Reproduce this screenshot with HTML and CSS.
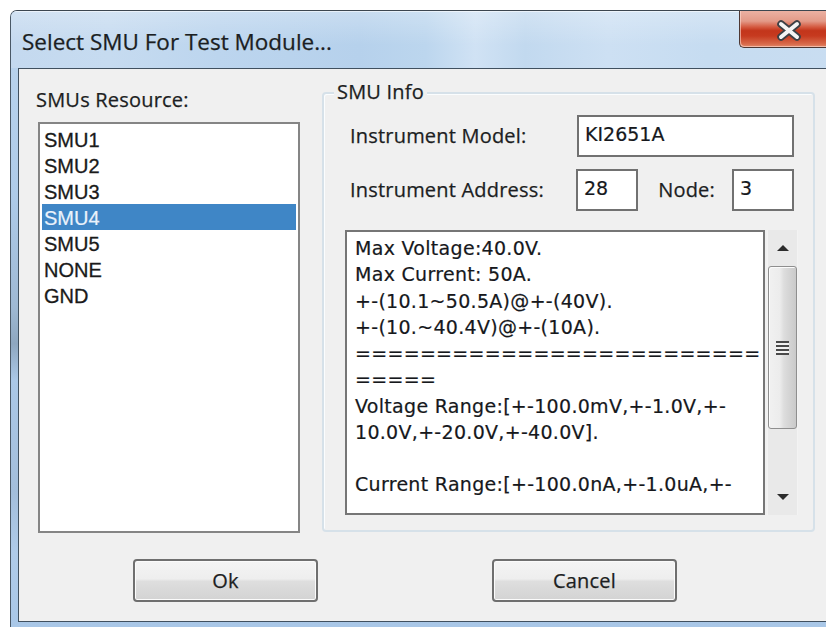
FILE: index.html
```html
<!DOCTYPE html>
<html>
<head>
<meta charset="utf-8">
<title>Select SMU For Test Module...</title>
<link rel="stylesheet" href="styles.css">
</head>
<body>
<div class="window">
  <div class="titlebar">
    <span class="title">Select SMU For Test Module...</span>
    <div class="close-btn">
      <svg class="close-x" width="26" height="21" viewBox="0 0 26 21">
        <path d="M5 4 L21 17 M21 4 L5 17" stroke="#3d4045" stroke-width="7.5" stroke-linecap="round"/>
        <path d="M5 4 L21 17 M21 4 L5 17" stroke="#f4f4f4" stroke-width="4" stroke-linecap="round"/>
      </svg>
    </div>
  </div>
  <div class="client">
    <div class="main">
      <div class="resources">
        <div class="label res-label">SMUs Resource:</div>
        <ul class="listbox">
          <li>SMU1</li>
          <li>SMU2</li>
          <li>SMU3</li>
          <li class="selected">SMU4</li>
          <li>SMU5</li>
          <li>NONE</li>
          <li>GND</li>
        </ul>
      </div>
      <div class="group">
        <div class="label group-title">SMU Info</div>
        <div class="row">
          <span class="label field-label">Instrument Model:</span>
          <div class="edit edit-model">KI2651A</div>
        </div>
        <div class="row row-address">
          <span class="label field-label field-label-address">Instrument Address:</span>
          <div class="edit edit-small">28</div>
          <span class="label node-label">Node:</span>
          <div class="edit edit-small">3</div>
        </div>
        <div class="info">
          <div class="info-text">Max Voltage:40.0V.
Max Current: 50A.
+-(10.1~50.5A)@+-(40V).
+-(10.~40.4V)@+-(10A).
=========================
=====
Voltage Range:[+-100.0mV,+-1.0V,+-
10.0V,+-20.0V,+-40.0V].

Current Range:[+-100.0nA,+-1.0uA,+-</div>
          <div class="scrollbar">
            <div class="sb-btn"><span class="arrow-up"></span></div>
            <div class="sb-track">
              <div class="sb-thumb">
                <span class="grip"></span>
              </div>
            </div>
            <div class="sb-btn"><span class="arrow-down"></span></div>
          </div>
        </div>
      </div>
    </div>
    <div class="buttons">
      <button class="btn btn-ok">Ok</button>
      <button class="btn btn-cancel">Cancel</button>
    </div>
  </div>
</div>
</body>
</html>
```
FILE: styles.css
```css
html, body {
  margin: 0;
  padding: 0;
}

body {
  width: 826px;
  height: 627px;
  overflow: hidden;
  background: #ffffff;
}

/* Window frame (glass border) */
.window {
  box-sizing: border-box;
  margin: 10px 0 0 10px;
  width: 830px;
  height: 617px;
  border-top: 1px solid #3c4650;
  border-left: 1px solid #4a5866;
  border-top-left-radius: 7px;
  overflow: hidden;
  display: flex;
  flex-direction: column;
  background: linear-gradient(180deg,
    #bcd5ee 0%, #aecbe9 30%, #9fb9d4 48%, #8ea7c0 54%,
    #abc8e7 60%, #a3bedb 78%, #afcbe9 88%, #a9c7e7 100%);
}

.titlebar {
  flex: 0 0 57px;
  display: flex;
  align-items: flex-start;
  padding-left: 11px;
  box-shadow: inset 0 1px 0 rgba(255, 255, 255, 0.55);
  background:
    linear-gradient(180deg, rgba(255, 255, 255, 0.25) 0%, rgba(255, 255, 255, 0) 60%),
    linear-gradient(90deg,
      #c4d9ef 0%, #c6dbf0 12%, #bcd5ee 25%, #b6d1ec 42%,
      #bcd6ee 50%, #d0e2f4 56%, #c2d9ef 62%, #cde0f3 72%,
      #c6dcf1 84%, #c9ddf1 100%);
}

.title {
  margin-top: 16px;
  font-family: "Open Sans", "Noto Sans", sans-serif;
  font-size: 22.5px;
  line-height: 30px;
  color: #1b1e22;
  -webkit-text-stroke: 0.25px #1b1e22;
}

.close-btn {
  margin-left: auto;
  margin-top: -1px;
  width: 101px;
  height: 38px;
  box-sizing: border-box;
  border-left: 1px solid #4e3834;
  border-bottom: 1px solid #4e3834;
  border-bottom-left-radius: 5px;
  box-shadow: inset 1px -1px 0 rgba(255, 220, 210, 0.6);
  background: linear-gradient(180deg,
    #ecb3a5 0%, #e39a88 30%, #d45a40 46%, #c3351b 56%,
    #c63a1f 70%, #d86a4b 92%, #e38a6b 100%);
  display: flex;
  padding-left: 36px;
  padding-top: 10px;
}

.close-x {
  display: block;
}

/* Dialog client area */
.client {
  box-sizing: border-box;
  flex: 0 0 554px;
  margin-left: 7px;
  border: 1px solid #40505f;
  background: #f0f0f0;
  padding-top: 18px;
  display: flex;
  flex-direction: column;
}

.label {
  font-family: "Open Sans", "Noto Sans", sans-serif;
  font-size: 20px;
  letter-spacing: 0.2px;
  line-height: 26px;
  color: #1c1e22;
  white-space: nowrap;
  -webkit-text-stroke: 0.25px #1c1e22;
}

.main {
  display: flex;
  align-items: flex-start;
}

.resources {
  margin-left: 19px;
  width: 262px;
  flex-shrink: 0;
}

.res-label {
  margin-left: -2px;
  margin-bottom: 9px;
}

.listbox {
  box-sizing: border-box;
  list-style: none;
  margin: 0;
  padding: 2px;
  height: 411px;
  background: #ffffff;
  border: 2px solid #858585;
}

.listbox li {
  box-sizing: border-box;
  height: 26px;
  padding: 3px 0 0 2px;
  line-height: 23px;
  font-family: "Liberation Sans", Arial, sans-serif;
  font-size: 20px;
  color: #1a1a1a;
  -webkit-text-stroke: 0.3px #1a1a1a;
}

.listbox li.selected {
  background: #3f86c6;
  color: #eaf2fb;
  -webkit-text-stroke: 0.2px #eaf2fb;
}

/* SMU Info group box */
.group {
  position: relative;
  box-sizing: border-box;
  margin: 5px 0 0 22px;
  width: 493px;
  height: 440px;
  flex-shrink: 0;
  border: 2px solid #d6e1e9;
  border-radius: 4px;
  box-shadow: inset 1px 1px 0 #fbfdfe;
  padding: 21px 15px 13px 21px;
}

.group-title {
  position: absolute;
  top: -15px;
  left: 10px;
  padding: 0 3px;
  background: #f0f0f0;
}

.row {
  display: flex;
  align-items: center;
  height: 42px;
  margin-right: 4px;
}

.row-address {
  margin-top: 12px;
}

.field-label {
  margin-left: 5px;
  width: 227px;
  flex-shrink: 0;
}

.field-label-address {
  width: 226px;
}

.node-label {
  margin-left: auto;
  margin-right: 17px;
}

.edit {
  box-sizing: border-box;
  height: 42px;
  border: 2px solid #717171;
  background: #ffffff;
  padding: 4px 0 0 6px;
  font-family: "DejaVu Sans", Verdana, sans-serif;
  font-size: 19px;
  line-height: 26.25px;
  color: #16181c;
  -webkit-text-stroke: 0.2px #16181c;
}

.edit-model {
  flex: 1;
}

.edit-small {
  width: 62px;
  flex-shrink: 0;
}

/* Read-only info text with its scroll bar */
.info {
  display: flex;
  margin-top: 19px;
  height: 285px;
}

.info-text {
  box-sizing: border-box;
  width: 420px;
  flex-shrink: 0;
  height: 100%;
  border: 2px solid #767676;
  background: #ffffff;
  padding: 3px 0 0 8px;
  overflow: hidden;
  white-space: pre;
  font-family: "DejaVu Sans", Verdana, sans-serif;
  font-size: 19px;
  letter-spacing: 0.3px;
  line-height: 26.25px;
  color: #16181c;
  -webkit-text-stroke: 0.2px #16181c;
}

.scrollbar {
  box-sizing: border-box;
  margin-left: 2px;
  width: 31px;
  flex-shrink: 0;
  display: flex;
  flex-direction: column;
  background: #e9e9e9;
  border-left: 1px solid #f3f3f3;
  border-right: 1px solid #f3f3f3;
}

.sb-btn {
  flex: 0 0 36px;
  display: flex;
  align-items: center;
  justify-content: center;
}

.arrow-up,
.arrow-down {
  width: 0;
  height: 0;
  border-left: 6px solid transparent;
  border-right: 6px solid transparent;
}

.arrow-up {
  border-bottom: 6px solid #2c2c2c;
}

.arrow-down {
  border-top: 6px solid #2c2c2c;
}

.sb-track {
  flex: 1;
}

.sb-thumb {
  box-sizing: border-box;
  height: 163px;
  border: 1px solid #8e8e8e;
  border-radius: 3px;
  box-shadow: inset 1px 1px 0 #fbfbfb;
  background: linear-gradient(90deg,
    #f1f1f1 0%, #ececec 40%, #dddddd 55%, #d2d2d2 80%, #c9c9c9 100%);
  display: flex;
  align-items: center;
  justify-content: center;
}

.grip {
  width: 13px;
  height: 14px;
  background: repeating-linear-gradient(180deg,
    #4a4a4a 0px, #4a4a4a 2px, #f2f2f2 2px, #f2f2f2 4px);
}

/* OK / Cancel */
.buttons {
  display: flex;
  margin-top: 26px;
  padding-left: 114px;
  gap: 174px;
}

.btn {
  box-sizing: border-box;
  width: 185px;
  height: 43px;
  padding: 0;
  border: 2px solid #6f6f6f;
  border-radius: 4px;
  box-shadow: inset 0 0 0 1px #fbfbfb;
  background: linear-gradient(180deg,
    #f4f4f4 0%, #eeeeee 46%, #dedede 52%, #d3d3d3 100%);
  font-family: "Open Sans", "Noto Sans", sans-serif;
  font-size: 20px;
  letter-spacing: 0.2px;
  color: #1c1e22;
  -webkit-text-stroke: 0.25px #1c1e22;
}
```
